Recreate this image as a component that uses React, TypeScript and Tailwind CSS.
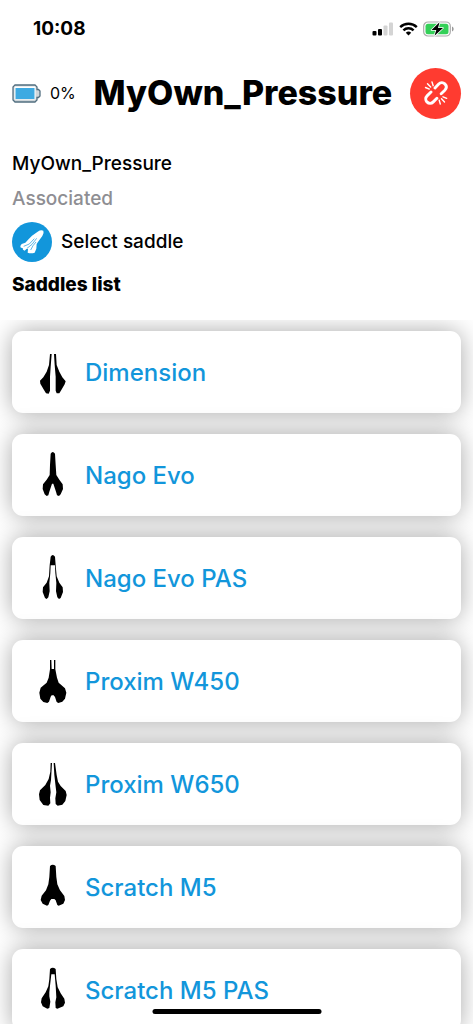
import type {ReactNode} from "react";

type Saddle = {
    name: string;
    viewBox: string;
    shape: string;
};

const saddles: Saddle[] = [
    {
        name: "Dimension",
        viewBox: "0 6 150 180",
        shape: "M60 42 57 75 50 95 40 112 30 122 31 131 42 150 48 160 56 161 60 152 60 110 62 80 65 42zM72 42H78L80 75 88 95 97 112 107 124 104 133 94 150 88 160H80L77 152V110L74 75z"
    },
    {
        name: "Nago Evo",
        viewBox: "0 0 150 180",
        shape: "M62 26Q68 16 75 26L77 60 79 90 88 104 98 118 99 132 92 148 87 153 81 151 78 140 70 116H66L58 140 55 151 50 153 44 148 38 132 39 118 50 104 59 90 60 60z"
    },
    {
        name: "Nago Evo PAS",
        viewBox: "0 0 150 180",
        shape: "M62 26Q68 16 75 26L77 52 80 85 88 104 98 118 99 132 92 150 87 153 82 148 78 130 79 105 76 75 75 52H62L61 75 58 105 59 130 55 148 50 153 45 150 38 132 39 118 50 104 57 85 59 52z"
    },
    {
        name: "Proxim W450",
        viewBox: "0 0 150 180",
        shape: "M60 27H64L65 54H72V27H76V55L81 80 86 95 105 112 109 125 105 143 97 152 85 156 80 153 75 138 71 133H65L62 137 57 152 52 156 40 153 31 143 28 125 32 110 50 95 56 80 60 55z"
    },
    {
        name: "Proxim W650",
        viewBox: "0 -3 150 180",
        shape: "M62 24H66L63 75 60 92 62 112 60 128 61 145 55 152 40 150 29 135 27 118 30 106 46 90 56 72 61 50zM71 24H75L80 60 84 80 92 93 107 108 110 120 106 138 97 149 83 152 77 147 76 130 79 112 77 95 73 60z"
    },
    {
        name: "Scratch M5",
        viewBox: "0 0 150 180",
        shape: "M60 27Q68 19 77 27L79 60 82 82 90 100 103 117 105 129 100 140 86 146 82 144 77 130 73 126H64L60 131 55 144 51 146 38 140 32 129 35 116 48 100 55 82 58 60z"
    },
    {
        name: "Scratch M5 PAS",
        viewBox: "0 3 150 180",
        shape: "M60 30Q68 22 77 30L79 60 83 85 92 103 103 119 105 131 100 142 82 149 77 147 76 130 79 115 77 80 74 46H64L60 80 58 100V112L61 128 58 147 52 149 38 142 33 130 35 118 47 100 55 82 58 60z"
    }
];

const StatusBar = () => (
    <div className="flex h-[58px] shrink-0 items-center justify-between pl-[33px] pr-[19px]">
        <span className="text-[19px] font-bold">10:08</span>
        <div className="flex items-center gap-[5px]">
            <svg className="h-[14px] w-[22px]" viewBox="0 0 22 14" aria-hidden="true">
                <rect x="0.5" y="9" width="4" height="4.5" rx="1"/>
                <rect x="6" y="7" width="4" height="6.5" rx="1"/>
                <rect x="11.5" y="3.5" width="4" height="10" rx="1" fill="#d4d4d4"/>
                <rect x="17" y="0.5" width="4" height="13" rx="1" fill="#d4d4d4"/>
            </svg>
            <svg className="h-[14px] w-[19px]" viewBox="0 0 19 14" fill="none" stroke="#000" strokeWidth="2.4" aria-hidden="true">
                <path d="M1.2 5.1a11.8 11.8 0 0 1 16.6 0M4.4 8.4a7.2 7.2 0 0 1 10.2 0"/>
                <path d="M9.5 13.4 6.8 10.7a3.9 3.9 0 0 1 5.4 0z" fill="#000" stroke="none"/>
            </svg>
            <svg className="h-4 w-[31px]" viewBox="0 0 31 16" aria-hidden="true">
                <rect x="0.7" y="1" width="26.6" height="14" rx="4.3" fill="none" stroke="#aaa" strokeWidth="1.2"/>
                <rect x="2.5" y="2.8" width="23" height="10.4" rx="2.5" fill="#34d058"/>
                <path d="M29 5.5v5c2.2-.9 2.2-4.1 0-5z" fill="#999"/>
                <path d="M16.5 1.2 8.5 9h4.8L11.5 14.8 20 7h-5z" stroke="#fff" strokeWidth="1.6" paintOrder="stroke" strokeLinejoin="round"/>
            </svg>
        </div>
    </div>
);

const BatteryIcon = () => (
    <svg className="h-[19px] w-[29px] shrink-0" viewBox="0 0 29 19" aria-hidden="true">
        <path d="M3 1h20l2 2v2.500h1.500L28 7v5l-1.500 1.500H25V16l-2 2H3l-2-2V3z" fill="#cfd6da" stroke="#526f80" strokeWidth="1.300"/>
        <rect x="2.5" y="2.5" width="21" height="13" fill="#fff"/>
        <rect x="3.5" y="4" width="19" height="11" fill="#3daae2"/>
    </svg>
);

const UnlinkIcon = () => (
    <svg className="h-6 w-6" viewBox="0 0 24 24" fill="none" stroke="#fff" strokeLinecap="round" aria-hidden="true">
        <path d="m11 7 3.500-3.700c2-2 4.600-2 6.300-.4 1.900 1.900 1.900 4.400 0 6.400l-3.600 3.400M7 11l-3.700 3.600c-2 2-2 4.600-.4 6.300 1.900 1.900 4.500 1.900 6.400 0l3.600-3.600" strokeWidth="2.900"/>
        <path d="m1.500 6.500 3.800 1.600M3.500 2.700l3.200 3.300M8 1l1.200 3.700M15.200 19.200l1.100 3.800M17.500 17.800l3 3.200M19 15.800l3.700 1.500" strokeWidth="1.400"/>
    </svg>
);

const SelectSaddleIcon = () => (
    <svg className="h-10 w-10" viewBox="0 0 120 120" aria-hidden="true">
        <path d="M25 72 29 66 40 62 51 50 60 41 77 29Q87 22 94 26 97 33 91 42L80 57 74 66 73 80 68 92Q57 96 47 92L48 81 44 80 38 86Q31 85 32 78 24 79 25 72z" fill="#fff"/>
        <path d="M35 73 52 66 67 50M45 79 60 67 74 49M56 84 63 71 72 60" fill="none" stroke="#1296db" strokeWidth="2"/>
    </svg>
);

const Row = ({children}: {children: ReactNode}) => (
    <li className="rounded-[11px] bg-white shadow-[0_0_24px_rgba(0,0,0,0.34)]">{children}</li>
);

const App = () => {
    return (
        <div className="relative flex h-screen flex-col overflow-hidden bg-white font-['Inter','Liberation_Sans',sans-serif] text-black">
            <StatusBar/>

            <header className="flex h-[70px] shrink-0 items-center px-3">
                <BatteryIcon/>
                <span className="ml-[9px] text-[16px]">0%</span>
                <h1 className="flex-1 text-center text-[34px] font-extrabold leading-10">MyOwn_Pressure</h1>
                <button
                    type="button"
                    aria-label="Disconnect"
                    className="flex h-[51px] w-[51px] shrink-0 items-center justify-center rounded-full bg-[#ff3b30]"
                >
                    <UnlinkIcon/>
                </button>
            </header>

            <section className="shrink-0 px-3 pt-6">
                <p className="text-[19px] font-medium leading-6">MyOwn_Pressure</p>
                <p className="mt-[11px] text-[19px] font-medium leading-6 text-[#8e8e93]">Associated</p>
                <button type="button" className="mt-[11px] flex items-center gap-[9px] text-[19px] font-medium">
                    <span className="rounded-full bg-[#1296db]">
                        <SelectSaddleIcon/>
                    </span>
                    Select saddle
                </button>
                <h2 className="mt-[11px] text-[19px] font-extrabold leading-6">Saddles list</h2>
            </section>

            <main className="mt-[23px] min-h-0 flex-1 overflow-hidden px-3 pt-[11px]">
                <ul className="flex flex-col gap-[21px]">
                    {saddles.map((saddle) => (
                        <Row key={saddle.name}>
                            <button type="button" className="flex h-[82px] w-full items-center gap-[5px] pl-[18px] text-left">
                                <svg className="h-[60px] w-[50px] shrink-0" viewBox={saddle.viewBox} aria-hidden="true">
                                    <path d={saddle.shape}/>
                                </svg>
                                <span className="pt-[2px] text-[24px] font-medium text-[#1296db]">{saddle.name}</span>
                            </button>
                        </Row>
                    ))}
                </ul>
            </main>

            <div className="absolute bottom-[10px] left-1/2 h-[5px] w-[169px] -translate-x-1/2 rounded-full bg-black"/>
        </div>
    );
};

export default App;
